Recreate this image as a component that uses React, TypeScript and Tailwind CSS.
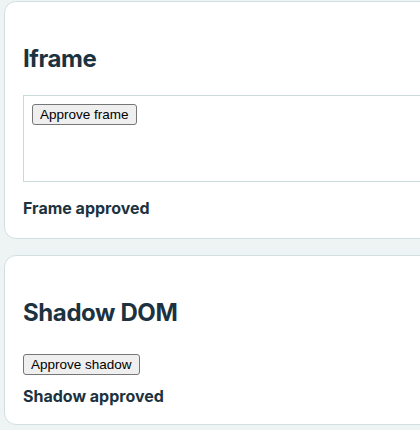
export default function App() {
  return (
    <div className="min-h-[430px] bg-[#eef3f3] pt-px pl-1 overflow-hidden font-['Inter','Liberation_Sans',sans-serif] text-[#1c3240]">
      {/* Iframe card */}
      <section className="w-[440px] h-[238px] rounded-xl border border-[#d3dfdf] bg-white px-[18px] pt-[42px]">
        <h2 className="text-[24px] leading-[29px] font-bold tracking-[-0.4px]">Iframe</h2>
        <div className="mt-[22px] h-[87px] w-[420px] border border-[#c9d8d8] bg-white p-2">
          <button className="block h-[21px] rounded-[3px] border border-[#767676] bg-[#efefef] px-[7px] text-[13.5px] leading-[17px] text-black font-['Liberation_Sans',Arial,sans-serif]">
            Approve frame
          </button>
        </div>
        <p className="mt-4 text-[16px] leading-[20px] font-bold">Frame approved</p>
      </section>

      {/* Shadow DOM card */}
      <section className="mt-[16px] w-[440px] h-[170px] rounded-xl border border-[#d3dfdf] bg-white px-[18px] pt-[42px]">
        <h2 className="text-[24px] leading-[29px] font-bold tracking-[-0.4px]">Shadow DOM</h2>
        <button className="mt-[27px] block h-[21px] rounded-[3px] border border-[#767676] bg-[#efefef] px-[7px] text-[13.5px] leading-[17px] text-black font-['Liberation_Sans',Arial,sans-serif]">
          Approve shadow
        </button>
        <p className="mt-[11px] text-[16px] leading-[20px] font-bold">Shadow approved</p>
      </section>
    </div>
  );
}
